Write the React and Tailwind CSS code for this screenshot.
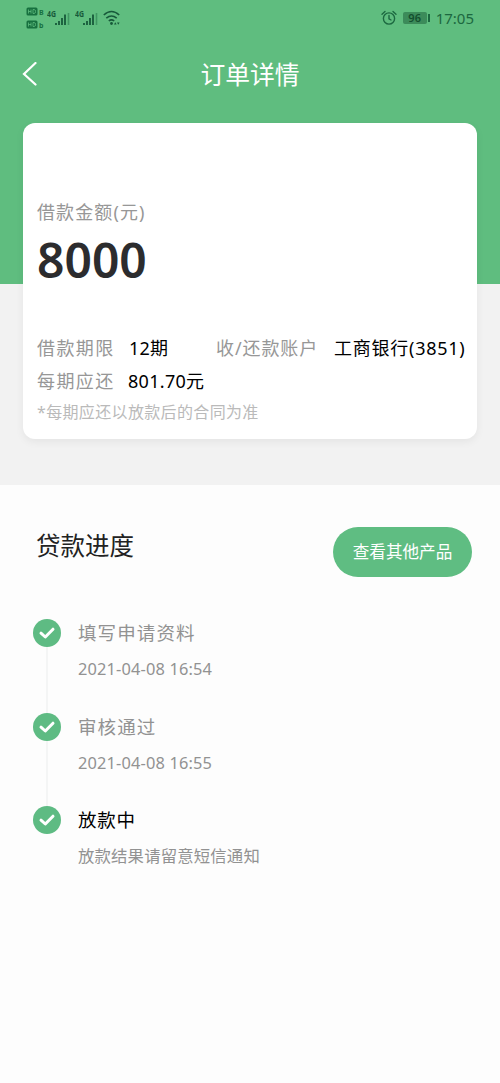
import React from 'react';

const steps = [
    { title: '填写申请资料', detail: '2021-04-08 16:54', active: false },
    { title: '审核通过', detail: '2021-04-08 16:55', active: false },
    { title: '放款中', detail: '放款结果请留意短信通知', active: true },
];

const HdBadge = ({ label }) => (
    <svg width="18" height="9" viewBox="0 0 18 9">
        <rect x="0.5" y="0.5" width="11" height="8" rx="1.5" fill="#17703f" />
        <path d="M2.5 2.5v4M5 2.5v4M2.5 4.5H5M7 2.5v4h1.2q1.3 0 1.3-2t-1.3-2z" fill="none" stroke="#5fbd7f" strokeWidth="0.8" />
        <text x="13" y="8" fontSize="7" fontWeight="700" fontFamily="Noto Sans" fill="#17703f">{label}</text>
    </svg>
);

const Signal = () => (
    <svg width="24" height="18" viewBox="0 0 24 18">
        <text x="0" y="8" fontSize="8" fontWeight="700" fontFamily="Noto Sans" textLength="9" lengthAdjust="spacingAndGlyphs" fill="#17593a">4G</text>
        <path d="M9 14v2M12 12v4M15 9v7M18 5.5V16" stroke="#17593a" strokeWidth="1.8" />
        <path d="M21.5 4V16" stroke="#3f9661" strokeWidth="1.6" />
    </svg>
);

const Wifi = () => (
    <svg width="18" height="18" viewBox="0 0 18 18" fill="none" stroke="#17593a" strokeWidth="1.6">
        <path d="M0.800 6Q8.500 -1 16.200 6M3.300 9.200Q8.500 4.800 13.700 9.200M5.800 12Q8.500 9.700 11.200 12" />
        <circle cx="8.500" cy="14.500" r="1.400" fill="#17593a" stroke="none" />
        <path d="M11 15.500l1.300-2.300 1.300 2.300zM14 13.500l1.300 2.300 1.300-2.300z" fill="#17593a" stroke="none" />
    </svg>
);

const AlarmClock = () => (
    <svg width="16" height="16" viewBox="0 0 16 16" fill="none" stroke="#1c6840" strokeWidth="1.4" strokeLinecap="round">
        <circle cx="8" cy="8.500" r="5.600" />
        <path d="M8 5.500v3.300l2 1.200M1 4.200L4 1.500M15 4.200L12 1.500" />
    </svg>
);

const CheckCircle = () => (
    <svg width="28" height="28" viewBox="0 0 28 28" className="shrink-0">
        <circle cx="14" cy="14" r="14" fill="#5ebb83" />
        <path d="M8 14.200L12.300 18L20 10.200" fill="none" stroke="#fff" strokeWidth="3" strokeLinecap="round" strokeLinejoin="round" />
    </svg>
);

const StatusBar = () => (
    <div className="flex h-9 items-center justify-between px-[26px] text-[#1c6840]">
        <div className="flex items-center">
            <div className="flex flex-col gap-1">
                <HdBadge label="B" />
                <HdBadge label="b" />
            </div>
            <div className="ml-[3px] flex items-center gap-1">
                <Signal />
                <Signal />
                <Wifi />
            </div>
        </div>
        <div className="flex items-center">
            <AlarmClock />
            <div className="ml-1.5 flex h-3 w-6 items-center justify-center rounded-xs bg-[#3c8b5a] text-[11px] font-semibold text-[#134f2e]">96</div>
            <div className="mr-1.5 ml-px h-2 w-0.5 bg-[#1c6840]" />
            <span className="text-[15px] leading-none">17:05</span>
        </div>
    </div>
);

const NavBar = () => (
    <div className="grid h-[77px] grid-cols-3 items-center px-[22px] text-white">
        <svg width="16" height="26" viewBox="0 0 16 26" fill="none" stroke="currentColor" strokeWidth="2.200" strokeLinecap="round">
            <path d="M13.500 1L2 12L13.500 22.500" />
        </svg>
        <h1 className="text-center text-[24.800px] font-normal whitespace-nowrap">订单详情</h1>
    </div>
);

const LoanCard = () => (
    <div className="mx-[23px] mt-2.5 h-[316px] rounded-xl bg-white px-3.5 pt-[76px] shadow-[0_3px_8px_rgba(0,0,0,0.06)]">
        <p className="h-7 text-[18px] leading-[27px] tracking-[1.100px] text-[#979797]">借款金额(元)</p>
        <p className="h-[66px] text-[48px] leading-[66px] font-semibold text-[#2c2c2e]">8000</p>
        <div className="mt-[39px] flex h-[33px] items-center text-[18px] whitespace-nowrap">
            <span className="w-[92px] shrink-0 tracking-[1.400px] text-[#979797]">借款期限</span>
            <span className="w-[87px] shrink-0 tracking-[0.200px] text-black">12期</span>
            <span className="w-[118px] shrink-0 tracking-[0.900px] text-[#979797]">收/还款账户</span>
            <span className="shrink-0 tracking-[0.750px] text-black">工商银行(3851)</span>
        </div>
        <div className="flex h-[33px] items-center text-[18px] whitespace-nowrap">
            <span className="w-[91px] tracking-[1.400px] text-[#979797]">每期应还</span>
            <span className="tracking-[0.300px] text-black">801.70元</span>
        </div>
        <p className="h-[30px] text-base leading-[28px] tracking-[0.350px] text-[#bababa]">*每期应还以放款后的合同为准</p>
    </div>
);

const Step = ({ step, last }) => (
    <div className={last ? 'flex' : 'flex h-[93.500px]'}>
        <div className="flex w-[28px] flex-col items-center">
            <CheckCircle />
            {!last && <div className="w-0.5 flex-1 bg-[#f4f5f5]" />}
        </div>
        <div className="ml-[17px]">
            <p className={step.active ? 'text-[18.500px] leading-7 tracking-[0.800px] text-black' : 'text-[18.500px] leading-7 tracking-[1.100px] text-[#929292]'}>{step.title}</p>
            <p className="mt-2 text-[16.400px] leading-7 tracking-[0.150px] text-[#929292]">{step.detail}</p>
        </div>
    </div>
);

const App = () => {
    return (
        <div className="h-[1083px] w-[500px] overflow-hidden bg-[#fdfdfd] font-['Noto_Sans','Noto_Sans_CJK_SC',sans-serif]">
            <header className="h-[485px] bg-[linear-gradient(#5fbd7f_284px,#f2f2f2_284px)]">
                <StatusBar />
                <NavBar />
                <LoanCard />
            </header>

            <section className="pt-[42px] pr-7 pl-[33px]">
                <div className="flex h-[50px] items-center justify-between">
                    <h2 className="mb-3 ml-[3px] text-[24.500px] font-normal text-[#222]">贷款进度</h2>
                    <button className="h-[50px] w-[139px] rounded-full bg-[#5fbd82] text-[16.600px] text-white">查看其他产品</button>
                </div>
                <div className="mt-[42px]">
                    {steps.map((step, i) => (
                        <Step key={step.title} step={step} last={i === steps.length - 1} />
                    ))}
                </div>
            </section>
        </div>
    );
};

export default App;
